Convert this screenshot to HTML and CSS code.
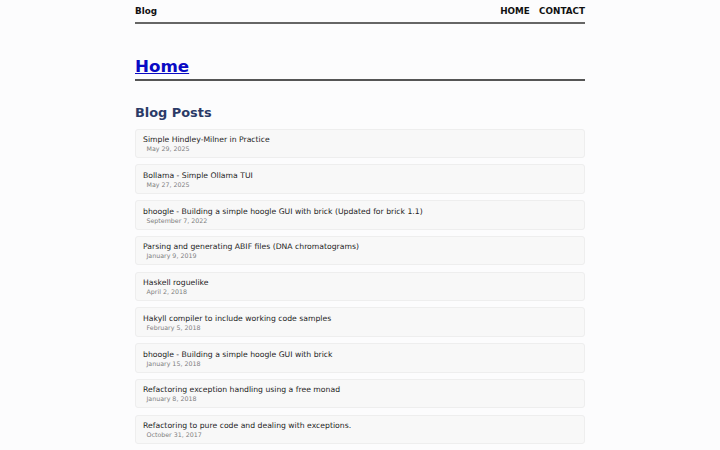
FILE: index.html
```html
<!DOCTYPE html>
<html lang="en">
<head>
<meta charset="utf-8">
<title>Blog</title>
<link rel="stylesheet" href="styles.css">
</head>
<body>
<div class="container">
  <header class="site-header">
    <a class="logo" href="#">Blog</a>
    <nav class="nav">
      <a href="#">HOME</a>
      <a href="#">CONTACT</a>
    </nav>
  </header>
  <main>
    <h1 class="page-title"><a href="#">Home</a></h1>
    <h2 class="section-title">Blog Posts</h2>
    <ul class="posts">
      <li class="post"><a class="post-title" href="#">Simple Hindley-Milner in Practice</a><span class="post-date">May 29, 2025</span></li>
      <li class="post"><a class="post-title" href="#">Bollama - Simple Ollama TUI</a><span class="post-date">May 27, 2025</span></li>
      <li class="post"><a class="post-title" href="#">bhoogle - Building a simple hoogle GUI with brick (Updated for brick 1.1)</a><span class="post-date">September 7, 2022</span></li>
      <li class="post"><a class="post-title" href="#">Parsing and generating ABIF files (DNA chromatograms)</a><span class="post-date">January 9, 2019</span></li>
      <li class="post"><a class="post-title" href="#">Haskell roguelike</a><span class="post-date">April 2, 2018</span></li>
      <li class="post"><a class="post-title" href="#">Hakyll compiler to include working code samples</a><span class="post-date">February 5, 2018</span></li>
      <li class="post"><a class="post-title" href="#">bhoogle - Building a simple hoogle GUI with brick</a><span class="post-date">January 15, 2018</span></li>
      <li class="post"><a class="post-title" href="#">Refactoring exception handling using a free monad</a><span class="post-date">January 8, 2018</span></li>
      <li class="post"><a class="post-title" href="#">Refactoring to pure code and dealing with exceptions.</a><span class="post-date">October 31, 2017</span></li>
    </ul>
  </main>
</div>
</body>
</html>
```
FILE: styles.css
```css
html, body {
  margin: 0;
  padding: 0;
  background: #fcfcfd;
  font-family: "DejaVu Sans", Verdana, sans-serif;
  color: #222;
}

.container {
  width: 450px;
  margin: 0 auto;
}

.site-header {
  display: flex;
  justify-content: space-between;
  align-items: flex-start;
  padding: 6px 0 5px;
  border-bottom: 2px solid #666;
  font-size: 8.8px;
  line-height: 11px;
  font-weight: bold;
}

.site-header a {
  color: #111;
  text-decoration: none;
}

.nav {
  display: flex;
  gap: 9.3px;
}

.page-title {
  margin: 32px 0 0;
  padding-bottom: 3px;
  border-bottom: 2px solid #555;
  font-size: 16.7px;
  line-height: 20px;
  font-weight: bold;
}

.page-title a {
  color: #0a0ac4;
  text-decoration: underline;
  text-decoration-thickness: 1px;
  text-underline-offset: 1px;
}

.section-title {
  margin: 24px 0 0;
  font-size: 12.9px;
  line-height: 16px;
  font-weight: bold;
  color: #2b3a67;
}

.posts {
  list-style: none;
  margin: 7.7px 0 0;
  padding: 0;
  display: flex;
  flex-direction: column;
  gap: 6.25px;
}

.post {
  display: flex;
  flex-direction: column;
  height: 29.5px;
  box-sizing: border-box;
  padding: 5.5px 7px 3px;
  background: #f8f8f8;
  border: 1px solid #eeeeee;
  border-radius: 3px;
}

.post-title {
  font-size: 7.7px;
  line-height: 9px;
  color: #1e1e1e;
  text-decoration: none;
}

.post-date {
  font-size: 6.3px;
  line-height: 10px;
  color: #7e7e7e;
  padding-left: 3.5px;
}
```
